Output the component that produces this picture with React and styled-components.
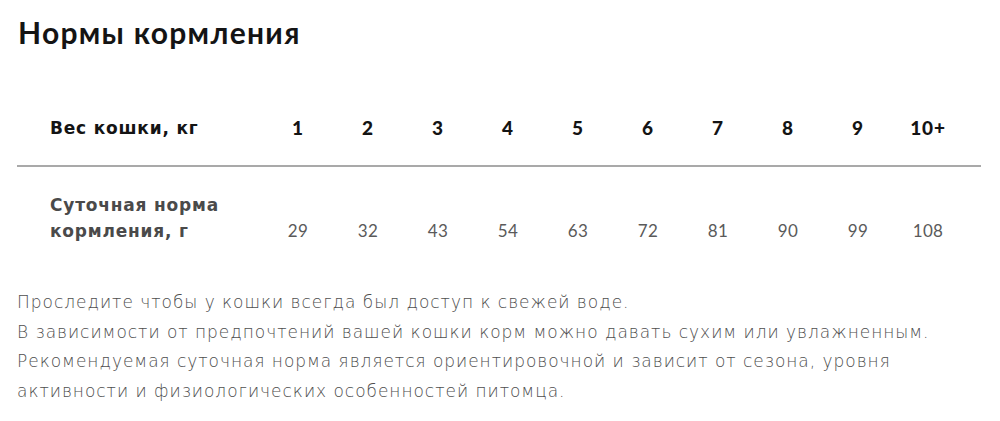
import React from "react";
import styled, { createGlobalStyle } from "styled-components";

const GlobalStyle = createGlobalStyle`
  body {
    margin: 0;
    background: #fff;
    font-family: "Lato", "Liberation Sans", sans-serif;
    color: #111;
  }
`;

const weights = ["1", "2", "3", "4", "5", "6", "7", "8", "9", "10+"];
const norms = ["29", "32", "43", "54", "63", "72", "81", "90", "99", "108"];

const FeedingNorms = () => {
  return (
    <Page>
      <GlobalStyle />
      <Title>Нормы кормления</Title>
      <Table>
        <HeadRow>
          <Label>Вес кошки, кг</Label>
          {weights.map((w) => (
            <Cell key={w} head>
              {w}
            </Cell>
          ))}
        </HeadRow>
        <ValueRow>
          <Label muted>
            Суточная норма
            <br />
            кормления, г
          </Label>
          {norms.map((n) => (
            <Cell key={n}>{n}</Cell>
          ))}
        </ValueRow>
      </Table>
      <Notes>
        Проследите чтобы у кошки всегда был доступ к свежей воде.
        <br />
        В зависимости от предпочтений вашей кошки корм можно давать сухим или
        увлажненным.
        <br />
        Рекомендуемая суточная норма является ориентировочной и зависит от
        сезона, уровня
        <br />
        активности и физиологических особенностей питомца.
      </Notes>
    </Page>
  );
};

const Page = styled.div`
  padding: 15px 19px 0 17px;
  height: 421px;
  box-sizing: border-box;
  overflow: hidden;
`;

const Title = styled.h2`
  margin: 0 0 0 1px;
  font-size: 30px;
  line-height: 34px;
  font-weight: 700;
  letter-spacing: 1.3px;
  color: #141414;
`;

const Table = styled.div`
  margin-top: 50px;
  width: 964px;
`;

const Row = styled.div`
  display: grid;
  grid-template-columns: 213px repeat(10, 70px);
  padding-left: 33px;
`;

const HeadRow = styled(Row)`
  align-items: center;
  padding-top: 17px;
  padding-bottom: 25px;
  border-bottom: 2px solid #a9a9a9;
  line-height: 24px;
`;

const ValueRow = styled(Row)`
  align-items: end;
  padding-top: 25px;
  line-height: 26px;
`;

const Label = styled.div`
  font-family: "DejaVu Sans", "Lato", sans-serif;
  font-size: 17px;
  font-weight: 700;
  color: ${(p) => (p.muted ? "#4a4a4a" : "#141414")};
  letter-spacing: 0.8px;
  white-space: nowrap;
`;

const Cell = styled.div`
  text-align: center;
  font-size: ${(p) => (p.head ? "19px" : "17px")};
  font-weight: ${(p) => (p.head ? 900 : 400)};
  letter-spacing: ${(p) => (p.head ? "0.8px" : "0.3px")};
  color: ${(p) => (p.head ? "#141414" : "#5a5a5a")};
`;

const Notes = styled.p`
  margin: 44px 0 0;
  font-family: "DejaVu Sans", "Open Sans", sans-serif;
  font-weight: 200;
  font-size: 17px;
  line-height: 29.5px;
  letter-spacing: 0.97px;
  color: #4e4e4e;
  white-space: nowrap;
`;

export default FeedingNorms;
